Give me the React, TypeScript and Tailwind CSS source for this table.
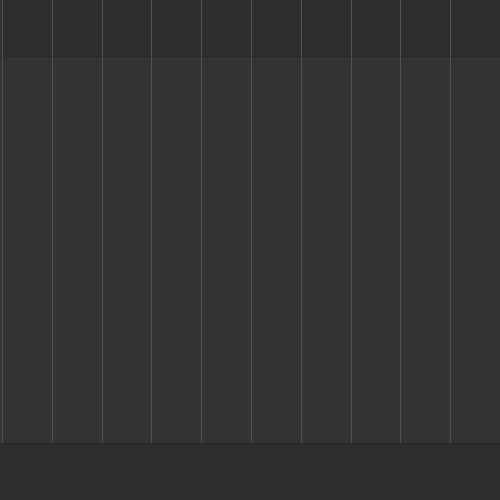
const COLUMNS = Array.from({ length: 10 }, (_, i) => i);

export default function App() {
  return (
    <div className="flex h-[500px] w-[500px] flex-col overflow-hidden bg-[#2d2d2d]">
      {/* grid area: header row + body */}
      <div className="flex h-[443px] bg-[#333333] pl-[2px]">
        {COLUMNS.map((i) => (
          <div key={i} className="flex flex-1 flex-col border-l border-[#525252]">
            <div className="h-[57px] border-b border-[#2a2a2a] bg-[#2e2e2e]" />
            <div className="flex-1 bg-[#333333]" />
          </div>
        ))}
      </div>
      {/* footer */}
      <div className="flex-1 border-t border-[#262626] bg-[#2d2d2d]" />
    </div>
  );
}
